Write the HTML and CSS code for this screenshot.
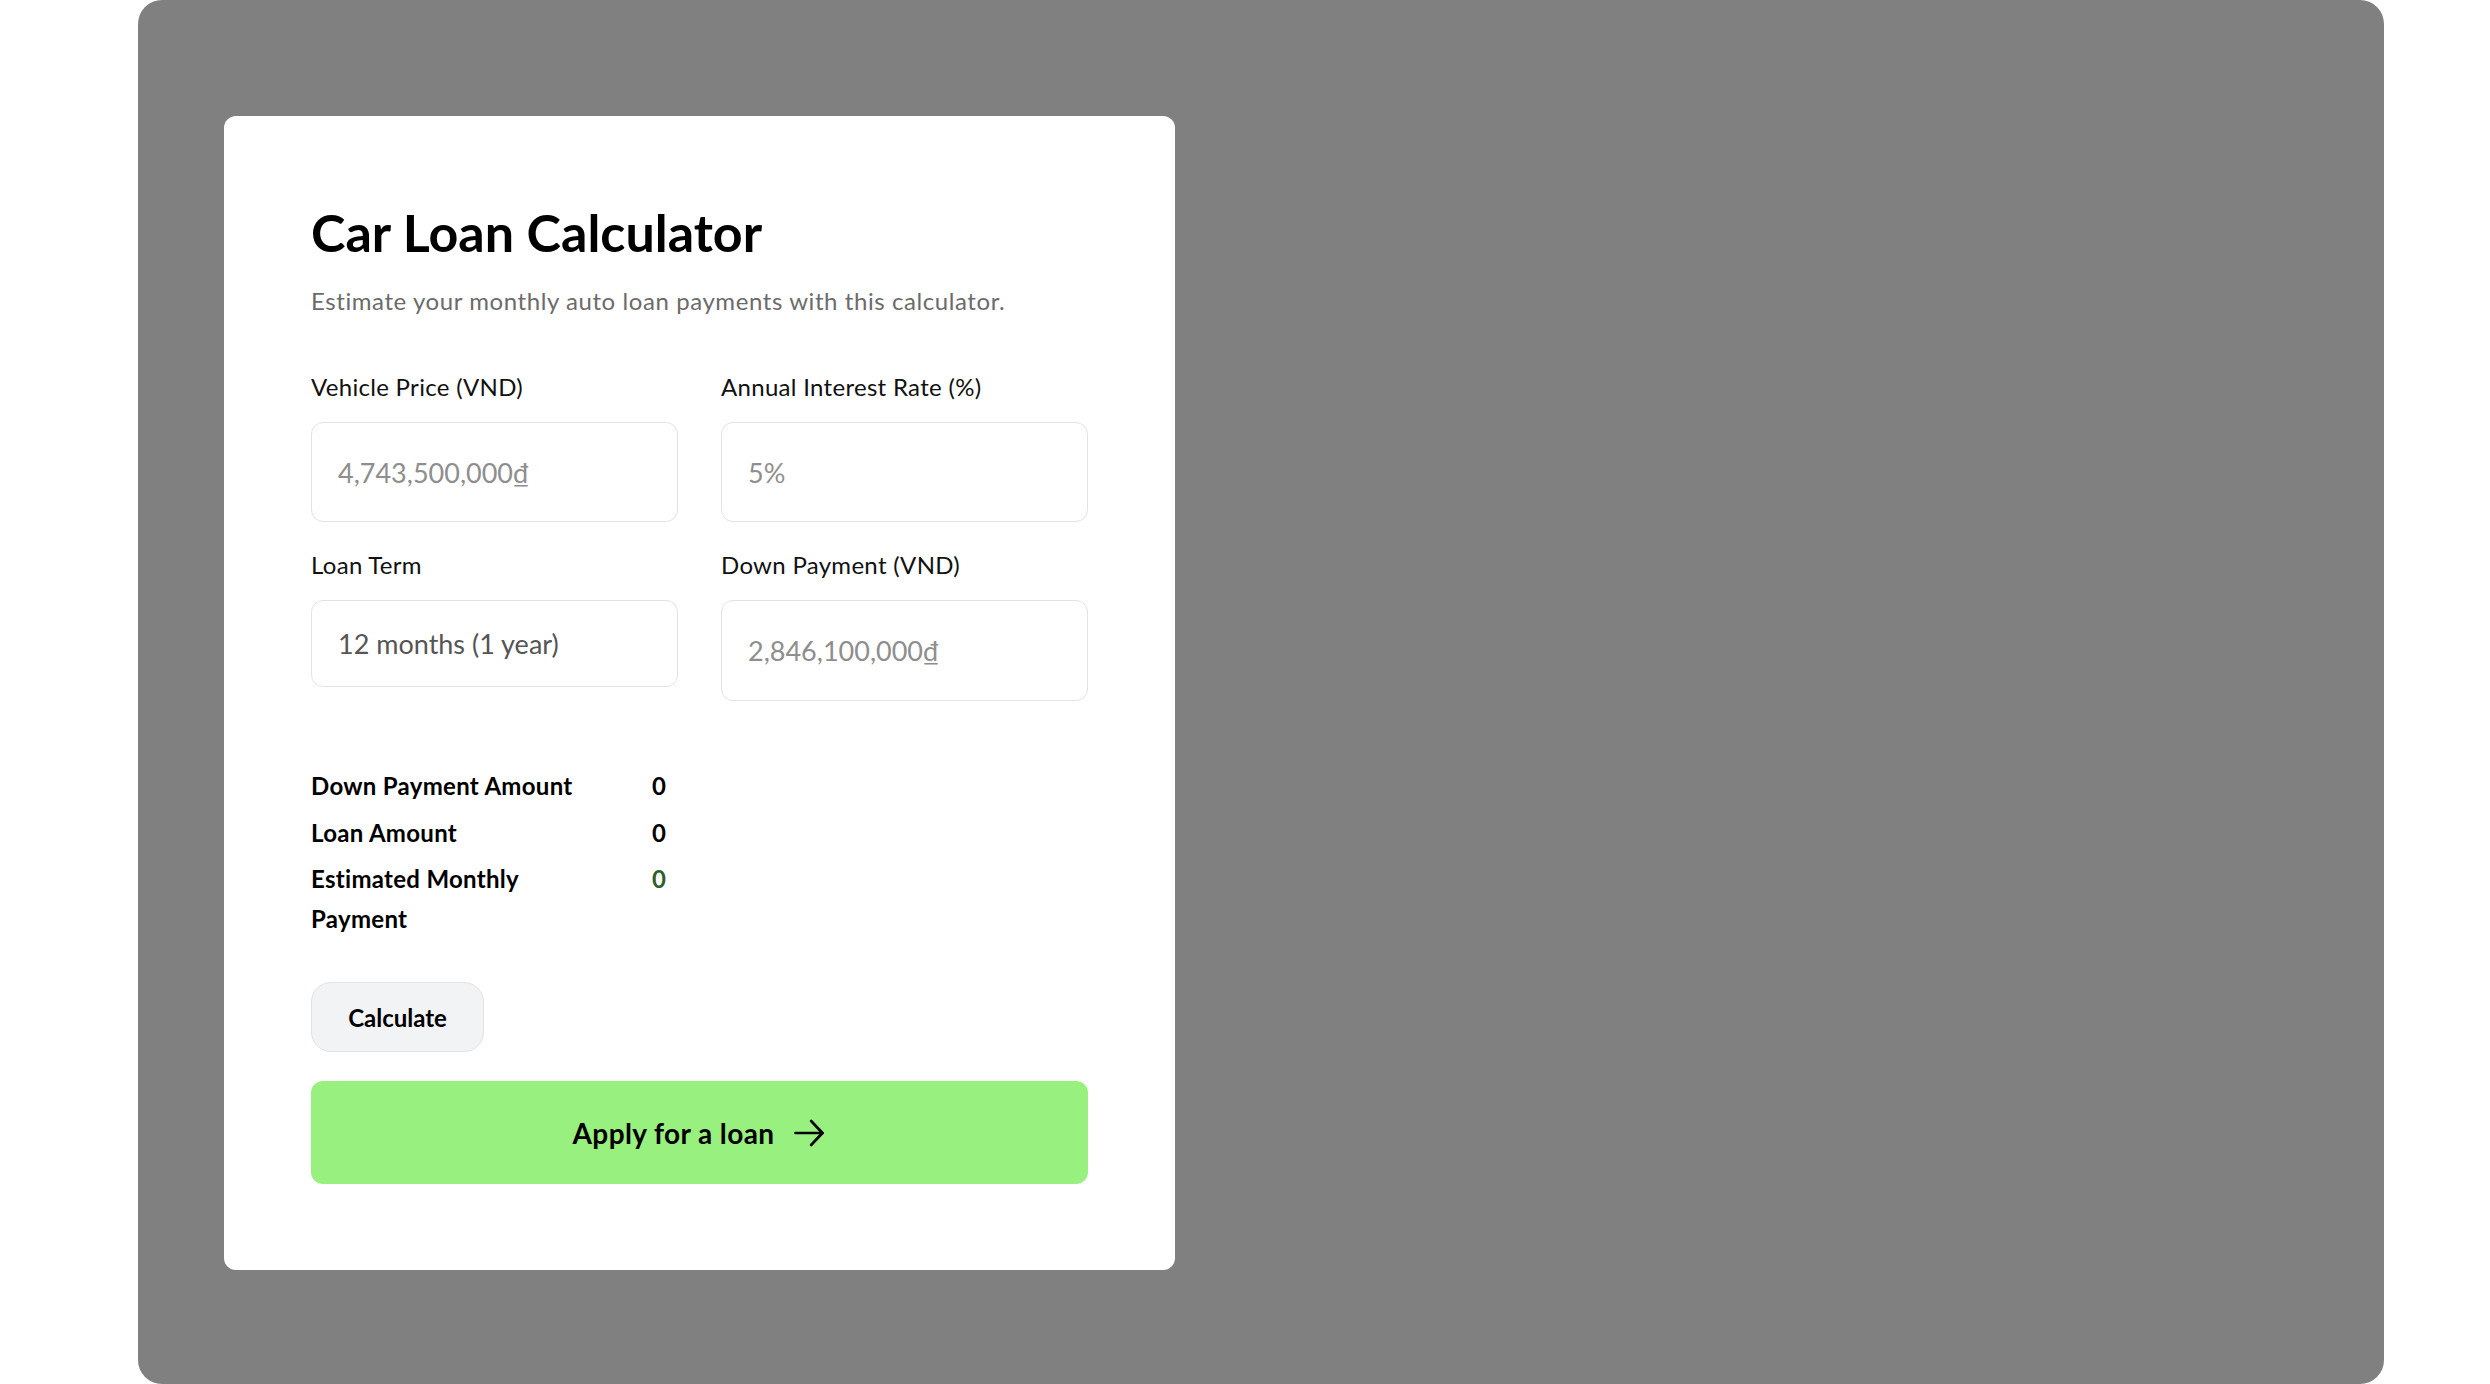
FILE: index.html
```html
<!DOCTYPE html>
<html lang="en">
<head>
<meta charset="utf-8">
<title>Car Loan Calculator</title>
<link rel="stylesheet" href="styles.css">
</head>
<body>
<div class="frame">
  <section class="card">
    <h1 class="title">Car Loan Calculator</h1>
    <p class="subtitle">Estimate your monthly auto loan payments with this calculator.</p>

    <div class="fields">
      <div class="field">
        <label class="label">Vehicle Price (VND)</label>
        <div class="input input-tall"><span class="placeholder">4,743,500,000₫</span></div>
      </div>
      <div class="field">
        <label class="label">Annual Interest Rate (%)</label>
        <div class="input input-tall"><span class="placeholder">5%</span></div>
      </div>
      <div class="field">
        <label class="label">Loan Term</label>
        <div class="input input-select"><span class="value">12 months (1 year)</span></div>
      </div>
      <div class="field">
        <label class="label">Down Payment (VND)</label>
        <div class="input input-taller"><span class="placeholder">2,846,100,000₫</span></div>
      </div>
    </div>

    <div class="results">
      <div class="r-label">Down Payment Amount</div><div class="r-value">0</div>
      <div class="r-label">Loan Amount</div><div class="r-value">0</div>
      <div class="r-label">Estimated Monthly Payment</div><div class="r-value r-green">0</div>
    </div>

    <button class="btn-calc" type="button">Calculate</button>

    <button class="btn-apply" type="button">
      <span>Apply for a loan</span>
      <svg class="arrow" width="34" height="34" viewBox="0 0 24 24" fill="none" stroke="#000" stroke-width="1.9" stroke-linecap="round" stroke-linejoin="round"><path d="M2.5 12h19"/><path d="M13.5 3.5l8 8.5-8 8.5"/></svg>
    </button>
  </section>
</div>
</body>
</html>
```

FILE: styles.css
```css
* { box-sizing: border-box; }

html, body {
  margin: 0;
  padding: 0;
  background: #ffffff;
}

body {
  font-family: "Lato", "Liberation Sans", sans-serif;
  color: #000;
}

.frame {
  margin-left: 138px;
  width: 2246px;
  height: 1384px;
  background: #808080;
  border-radius: 24px;
  padding: 116px 0 0 86px;
}

.card {
  width: 951px;
  background: #ffffff;
  border-radius: 12px;
  padding: 85px 87px 86px;
}

.title {
  margin: 0;
  font-size: 52px;
  line-height: 62.4px;
  font-weight: 700;
  letter-spacing: 0;
}

.subtitle {
  margin: 21px 0 0;
  font-size: 24px;
  line-height: 33px;
  letter-spacing: 0.58px;
  color: #6b6b6b;
}

.fields {
  margin-top: 52px;
  display: grid;
  grid-template-columns: 367px 367px;
  column-gap: 43px;
  row-gap: 24.7px;
  align-items: start;
}

.field {
  display: flex;
  flex-direction: column;
  gap: 17px;
}

.label {
  font-size: 24px;
  line-height: 36px;
  letter-spacing: 0.3px;
  color: #111;
}

.input {
  display: flex;
  align-items: center;
  border: 1px solid #e3e3e3;
  border-radius: 12px;
  padding: 0 26px;
  font-size: 27px;
}

.input-tall { height: 100px; }
.input-select { height: 87px; font-size: 27px; }
.input-taller { height: 101px; }

.placeholder { color: #8e8e8e; }
.value { color: #555555; }

.results {
  margin-top: 65px;
  display: grid;
  grid-template-columns: 300px auto;
  column-gap: 41px;
  row-gap: 6.5px;
  font-size: 24px;
  line-height: 40px;
  font-weight: 700;
  letter-spacing: 0.3px;
}

.r-green { color: #2f5f2a; }

.btn-calc {
  display: block;
  margin-top: 43px;
  width: 173px;
  height: 70px;
  border: 1px solid #e2e2e2;
  border-radius: 20px;
  background: #f2f3f5;
  font-family: inherit;
  font-size: 24px;
  font-weight: 700;
  color: #000;
  padding: 0;
}

.btn-apply {
  margin-top: 29px;
  width: 100%;
  height: 103px;
  border: none;
  border-radius: 12px;
  background: #98f07f;
  display: flex;
  align-items: center;
  justify-content: center;
  gap: 18px;
  font-family: inherit;
  font-size: 28px;
  font-weight: 700;
  letter-spacing: 0.4px;
  color: #000;
  padding: 0;
}

.arrow { display: block; }
```
